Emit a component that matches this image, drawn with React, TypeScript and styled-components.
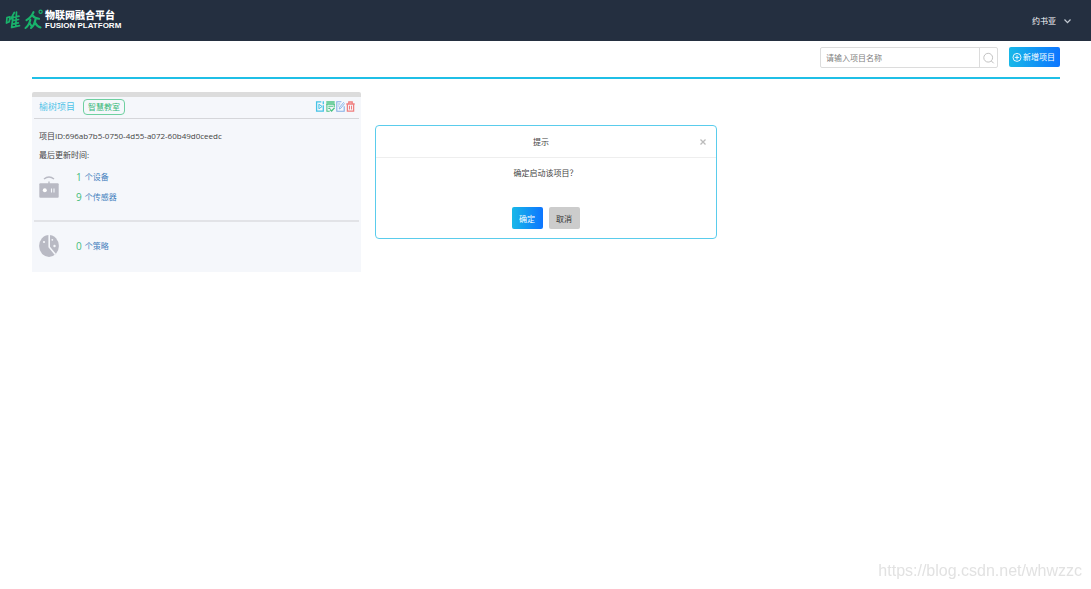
import React, { useState } from "react";
import styled, { createGlobalStyle } from "styled-components";

const GlobalStyle = createGlobalStyle`
  *, *::before, *::after { box-sizing: border-box; }
  body {
    margin: 0;
    background: #fff;
    color: #444;
    font-family: "Open Sans", "Noto Sans CJK SC", sans-serif;
    font-size: 8px;
    line-height: 12px;
  }
  button, input { font: inherit; }
  button { cursor: pointer; }
  svg { display: block; }
`;

const Header = styled.header`
  display: flex;
  align-items: center;
  justify-content: space-between;
  height: 41px;
  padding: 0 20px 0 5px;
  background: #242f40;
  color: #fff;
`;

const Brand = styled.a`
  display: flex;
  align-items: center;
  gap: 2px;
  padding-bottom: 2px;
  color: #fff;
  text-decoration: none;
`;

const BrandMark = styled.svg`
  width: 38px;
  height: 24px;
`;

const BrandText = styled.span`
  display: flex;
  flex-direction: column;
  white-space: nowrap;
`;

const BrandName = styled.span`
  font-family: "Noto Sans CJK SC", sans-serif;
  font-size: 10px;
  font-weight: 900;
  line-height: 12px;
`;

const BrandSub = styled.span`
  font-family: "Liberation Sans", sans-serif;
  font-size: 8px;
  font-weight: 700;
  line-height: 9px;
`;

const UserMenu = styled.button`
  display: flex;
  align-items: center;
  gap: 8px;
  padding: 0;
  border: 0;
  background: none;
  color: #fff;
`;

const Main = styled.main`
  padding: 0 31px 0 32px;
`;

const Toolbar = styled.div`
  display: flex;
  justify-content: flex-end;
  gap: 11px;
  padding: 6px 0 9px;
  border-bottom: 2px solid #1fbfe6;
`;

const Search = styled.form`
  display: flex;
  width: 178px;
  height: 21px;
  border: 1px solid #dcdcdc;
  border-radius: 2px;
`;

const SearchInput = styled.input`
  flex: 1;
  min-width: 0;
  padding: 0 5px;
  border: 0;
  background: none;
  color: #444;
  outline: none;
  &::placeholder { color: #808080; opacity: 1; }
`;

const SearchButton = styled.button`
  display: grid;
  place-items: center;
  width: 18px;
  padding: 0;
  border: 0;
  border-left: 1px solid #dcdcdc;
  background: none;
  color: #bbb;
`;

const AddButton = styled.button`
  display: flex;
  align-items: center;
  justify-content: center;
  gap: 1px;
  width: 51px;
  height: 20px;
  padding: 0 2px 0 0;
  border: 0;
  border-radius: 2px;
  background: linear-gradient(90deg, #18b8e8, #0d75ff);
  color: #fff;
  white-space: nowrap;
`;

const CardList = styled.section`
  padding-top: 13px;
`;

const Card = styled.article`
  width: 32%;
  min-width: 260px;
  padding: 0 2px;
  border-top: 5px solid #dcdcdc;
  border-radius: 2px 2px 0 0;
  background: #f5f7fb;
`;

const CardHead = styled.div`
  display: flex;
  align-items: center;
  height: 22px;
  padding: 0 4px 2px 5px;
  border-bottom: 1px solid #d5d6da;
`;

const CardTitle = styled.h2`
  margin: 0 8px 0 0;
  color: #4fc3e8;
  font-size: 9px;
  font-weight: 400;
`;

const Tag = styled.span`
  padding: 0 4px;
  border: 1px solid #6fd0a0;
  border-radius: 4px;
  color: #35b878;
  line-height: 14px;
`;

const Actions = styled.div`
  display: flex;
  gap: 1px;
  margin-left: auto;
`;

const IconButton = styled.button<{ $color: string }>`
  padding: 0;
  border: 0;
  background: none;
  color: ${(p) => p.$color};
`;

const Details = styled.div`
  padding: 7px 5px 0;
  line-height: 19px;
`;

const Line = styled.p`
  margin: 0;
`;

const StatRow = styled.div<{ $divided?: boolean }>`
  display: flex;
  align-items: center;
  gap: 17px;
  height: ${(p) => (p.$divided ? "58px" : "50px")};
  padding: 0 5px ${(p) => (p.$divided ? "10px" : "2px")};
  border-bottom: ${(p) => (p.$divided ? "2px solid #e2e3e7" : "0")};
  color: #b9bac4;
`;

const StatList = styled.div`
  display: flex;
  flex-direction: column;
`;

const Stat = styled.a`
  display: flex;
  align-items: center;
  gap: 3px;
  height: 20px;
  color: #4480bd;
  text-decoration: none;
`;

const Count = styled.span`
  color: #45bd7c;
  font-size: 10px;
`;

const Dialog = styled.div`
  position: fixed;
  top: 125px;
  left: 50%;
  width: 342px;
  transform: translateX(-50%);
  border: 1px solid #5accec;
  border-radius: 4px;
  background: #fff;
  text-align: center;
`;

const DialogHead = styled.div`
  display: grid;
  grid-template-columns: 16px 1fr 26px;
  align-items: center;
  height: 32px;
  padding-left: 1px;
  border-bottom: 1px solid #eee;
`;

const DialogTitle = styled.h2`
  grid-column: 2;
  margin: 0;
  font-size: 8px;
  font-weight: 400;
`;

const CloseButton = styled.button`
  display: grid;
  place-items: center;
  padding: 0;
  border: 0;
  background: none;
  color: #bbb;
`;

const DialogText = styled.p`
  margin: 0;
  padding: 9px 0 28px;
`;

const DialogActions = styled.div`
  display: flex;
  justify-content: center;
  gap: 6px;
  padding-bottom: 9px;
`;

const DialogButton = styled.button<{ $primary?: boolean }>`
  width: 31px;
  height: 22px;
  padding: 1px 0 0;
  border: 0;
  border-radius: 2px;
  background: ${(p) => (p.$primary ? "linear-gradient(90deg, #18b8e8, #0d75ff)" : "#ccc")};
  color: ${(p) => (p.$primary ? "#fff" : "#333")};
`;

const Watermark = styled.div`
  position: fixed;
  right: 9px;
  bottom: 9px;
  color: #e2e2e2;
  font-family: "Liberation Sans", sans-serif;
  font-size: 16px;
  line-height: 18px;
`;

const Logo = () => (
  <BrandMark viewBox="0 0 38 24" fill="none" stroke="#19b26b" strokeLinecap="round" strokeLinejoin="round" aria-hidden="true">
    <path d="M2 9.5 1.5 15M2 9.5 5 8.8 4.2 13.8 1.5 15" strokeWidth="1.7" />
    <path d="M9.3 4.5 5.8 11M8 8.5 6.6 19.5M11.5 4 10.8 18M8 9.5 14 8.2M7.6 12.7 13.5 11.5M7.2 16 13.3 14.8M6.8 19.3 14.5 17.6" strokeWidth="1.7" />
    <path d="M28.5 4.2C27 8 24.5 10.5 21.5 12.2M27.5 7.5C29 9.5 31 10.5 34 10.8" strokeWidth="2.1" />
    <path d="M25.3 11.8C24.5 15.5 23 18.3 20.5 20M24.5 15 26.8 18.5M30.5 11.5C30 15 28.3 18 26 20M30 14.5C31.2 17 32.5 18.5 35.5 19.5" strokeWidth="2.1" />
    <circle cx="35.6" cy="3.7" r="1.6" strokeWidth="1.2" />
  </BrandMark>
);

const ChevronIcon = () => (
  <svg width="7" height="6" viewBox="0 0 7 6" fill="none" stroke="#c3cad3" strokeWidth="1.2" aria-hidden="true">
    <path d="M.5 1.5 3.5 4.7 6.5 1.5" />
  </svg>
);

const SearchIcon = () => (
  <svg width="12" height="12" viewBox="0 0 12 12" fill="none" stroke="currentColor" aria-hidden="true">
    <circle cx="5.2" cy="5.7" r="4.4" strokeWidth=".9" />
    <path d="m8.4 9 2.3 2.3" />
  </svg>
);

const PlusIcon = () => (
  <svg width="10" height="10" viewBox="0 0 10 10" fill="none" stroke="currentColor" strokeWidth=".9" aria-hidden="true">
    <circle cx="5" cy="5.4" r="4" />
    <path d="M5 3.2v4.4M2.8 5.4h4.4" />
  </svg>
);

const PlayIcon = () => (
  <svg width="10" height="11" viewBox="0 0 9 11" fill="none" stroke="currentColor" aria-hidden="true">
    <path d="M5.8.8H1.1v9.4h4.7M7.8.3v3M7.8 4.3v6.4M5.8 10.2h2" strokeWidth="1.3" />
    <path d="m3.4 3.2 3.2 2.3-3.2 2.3z" />
  </svg>
);

const CheckFormIcon = () => (
  <svg width="9" height="11" viewBox="0 0 9 11" fill="none" stroke="currentColor" aria-hidden="true">
    <path d="M.3 1h8.4M.3 3h8.4" strokeWidth="1.3" />
    <path d="M.9 3v7.2h2.8M8.2 3v3M2.3 5.2h4.7M2.3 7.4h2" strokeWidth="1.1" />
    <path d="m4 8.4 1.6 1.5 3-3.3" strokeWidth="1.4" />
  </svg>
);

const EditIcon = () => (
  <svg width="9" height="11" viewBox="0 0 9 11" fill="none" stroke="currentColor" aria-hidden="true">
    <path d="M5.4.8H.8v9.5h7.4V5.2" strokeWidth="1.1" />
    <path d="M7.8 1.2 3.7 6.2 3.2 8l1.7-.8 3.8-4.8M2.2 3h2M2.2 5h1" strokeWidth=".9" />
  </svg>
);

const TrashIcon = () => (
  <svg width="9" height="11" viewBox="0 0 9 11" fill="none" stroke="currentColor" aria-hidden="true">
    <path d="M.3 3h8.4M2.8 2.7V1h3.4v1.7M1.4 3v7.2h6.2V3" strokeWidth="1.3" />
    <path d="M3.5 4.7v3.8M5.5 4.7v3.8" />
  </svg>
);

const DeviceIcon = () => (
  <svg width="20" height="22" viewBox="0 0 20 22" fill="none" aria-hidden="true">
    <path d="M5 3C8 .7 12 .7 15 3" stroke="currentColor" strokeWidth="1.5" />
    <path d="M10 5.5V8" stroke="currentColor" strokeWidth="1.4" />
    <rect x=".3" y="7.3" width="19.4" height="14.4" rx="1" fill="currentColor" />
    <circle cx="5.8" cy="14.3" r="2" fill="#fff" />
    <path d="M12.5 12.5v4M15 12.5v4" stroke="#f5f7fb" strokeWidth="1.1" />
  </svg>
);

const StrategyIcon = () => (
  <svg width="20" height="22" viewBox="0 0 20 22" fill="none" aria-hidden="true">
    <ellipse cx="10" cy="11" rx="9.9" ry="10.9" fill="currentColor" />
    <path d="M10.2 0v12l6.2 7.6" stroke="#f5f7fb" strokeWidth="1.6" />
    <circle cx="5" cy="7" r="1.1" fill="#f5f7fb" />
    <circle cx="13.3" cy="4.8" r=".9" fill="#f5f7fb" />
    <circle cx="15.5" cy="11" r="1.2" fill="#f5f7fb" />
  </svg>
);

const CloseIcon = () => (
  <svg width="6" height="6" viewBox="0 0 6 6" fill="none" stroke="currentColor" strokeWidth="1.3" aria-hidden="true">
    <path d="m.5.5 5 5M5.5.5l-5 5" />
  </svg>
);

export default function App() {
  const [open, setOpen] = useState(true);
  const [query, setQuery] = useState("");
  const close = () => setOpen(false);

  return (
    <>
      <GlobalStyle />
      <Header>
        <Brand href="#">
          <Logo />
          <BrandText>
            <BrandName>物联网融合平台</BrandName>
            <BrandSub>FUSION PLATFORM</BrandSub>
          </BrandText>
        </Brand>
        <UserMenu type="button">
          约书亚
          <ChevronIcon />
        </UserMenu>
      </Header>
      <Main>
        <Toolbar>
          <Search onSubmit={(e) => e.preventDefault()}>
            <SearchInput
              aria-label="项目名称"
              placeholder="请输入项目名称"
              value={query}
              onChange={(e) => setQuery(e.target.value)}
            />
            <SearchButton type="submit" aria-label="搜索">
              <SearchIcon />
            </SearchButton>
          </Search>
          <AddButton type="button" onClick={() => setOpen(true)}>
            <PlusIcon />
            新增项目
          </AddButton>
        </Toolbar>
        <CardList>
          <Card>
            <CardHead>
              <CardTitle>榆树项目</CardTitle>
              <Tag>智慧教室</Tag>
              <Actions>
                <IconButton type="button" $color="#45c3e6" aria-label="启动" onClick={() => setOpen(true)}>
                  <PlayIcon />
                </IconButton>
                <IconButton type="button" $color="#4bc384" aria-label="配置">
                  <CheckFormIcon />
                </IconButton>
                <IconButton type="button" $color="#82b0e6" aria-label="编辑">
                  <EditIcon />
                </IconButton>
                <IconButton type="button" $color="#f07f7f" aria-label="删除">
                  <TrashIcon />
                </IconButton>
              </Actions>
            </CardHead>
            <Details>
              <Line>项目ID:696ab7b5-0750-4d55-a072-60b49d0ceedc</Line>
              <Line>最后更新时间:</Line>
            </Details>
            <StatRow $divided>
              <DeviceIcon />
              <StatList>
                <Stat href="#"><Count>1</Count>个设备</Stat>
                <Stat href="#"><Count>9</Count>个传感器</Stat>
              </StatList>
            </StatRow>
            <StatRow>
              <StrategyIcon />
              <StatList>
                <Stat href="#"><Count>0</Count>个策略</Stat>
              </StatList>
            </StatRow>
          </Card>
        </CardList>
      </Main>
      {open && (
        <Dialog role="dialog" aria-labelledby="dialog-title">
          <DialogHead>
            <DialogTitle id="dialog-title">提示</DialogTitle>
            <CloseButton type="button" aria-label="关闭" onClick={close}>
              <CloseIcon />
            </CloseButton>
          </DialogHead>
          <DialogText>确定启动该项目？</DialogText>
          <DialogActions>
            <DialogButton type="button" $primary onClick={close}>确定</DialogButton>
            <DialogButton type="button" onClick={close}>取消</DialogButton>
          </DialogActions>
        </Dialog>
      )}
      <Watermark>https://blog.csdn.net/whwzzc</Watermark>
    </>
  );
}
